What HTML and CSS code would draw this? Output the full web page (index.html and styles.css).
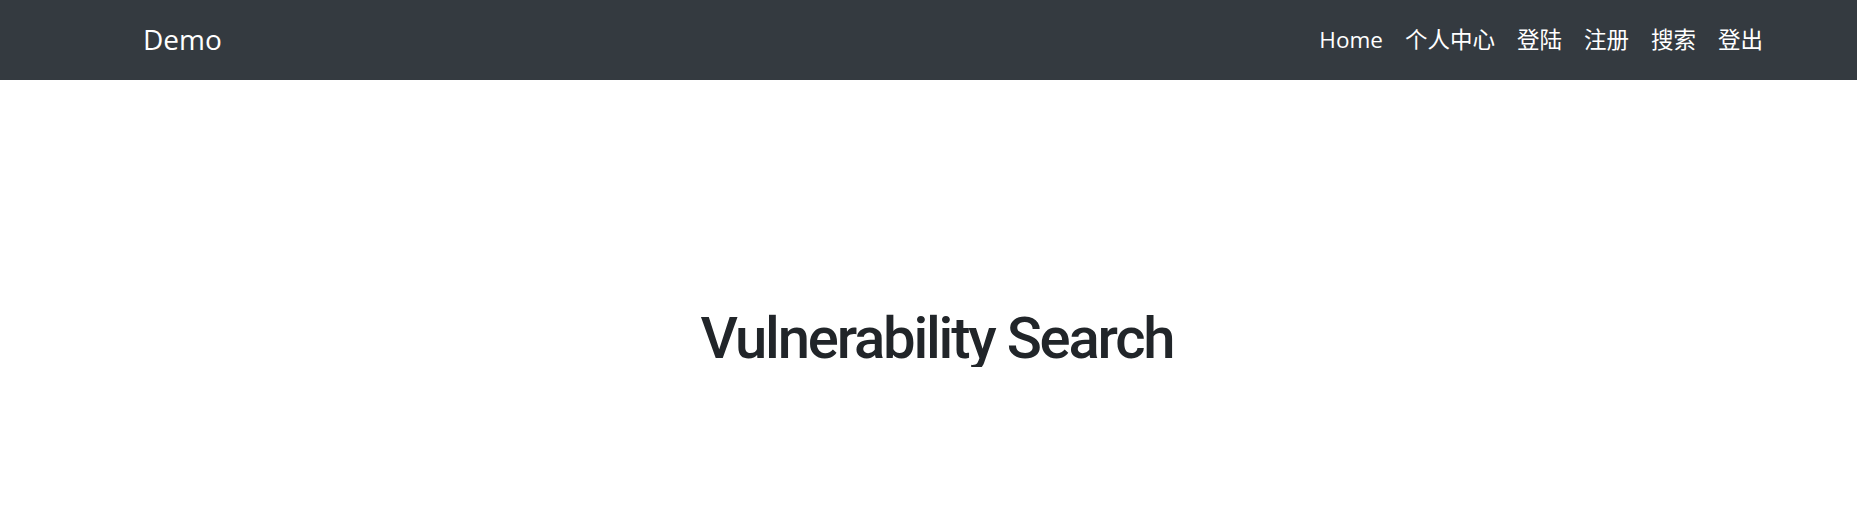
FILE: index.html
```html
<!DOCTYPE html>
<html lang="zh">
<head>
<meta charset="utf-8">
<title>Demo</title>
<link rel="stylesheet" href="styles.css">
</head>
<body>
<header class="navbar">
  <a class="brand" href="#">Demo</a>
  <nav class="nav">
    <a class="nav-link" href="#">Home</a>
    <a class="nav-link" href="#">个人中心</a>
    <a class="nav-link" href="#">登陆</a>
    <a class="nav-link" href="#">注册</a>
    <a class="nav-link" href="#">搜索</a>
    <a class="nav-link" href="#">登出</a>
  </nav>
</header>
<main class="main">
  <h1 class="title">Vulnerability Search</h1>
</main>
</body>
</html>
```

FILE: styles.css
```css
* { box-sizing: border-box; }
html, body { margin: 0; padding: 0; }
body {
  font-family: "Open Sans", "Noto Sans CJK SC", sans-serif;
  background: #fff;
  color: #212529;
}
.navbar {
  height: 80px;
  background: #343a40;
  display: flex;
  align-items: center;
  justify-content: space-between;
  padding: 0 94px 0 143px;
}
.brand {
  color: #fff;
  text-decoration: none;
  font-size: 28px;
  line-height: 1;
  margin-top: -2px;
}
.nav {
  display: flex;
  align-items: center;
  gap: 22px;
}
.nav-link {
  color: #fff;
  text-decoration: none;
  font-size: 22.5px;
  line-height: 1;
}
.main {
  display: flex;
  justify-content: center;
  padding: 229px 0 0 17px;
}
.title {
  margin: 0;
  font-family: Roboto, "Open Sans", sans-serif;
  font-size: 58px;
  font-weight: 500;
  letter-spacing: -2.2px;
  line-height: 1;
}
```
